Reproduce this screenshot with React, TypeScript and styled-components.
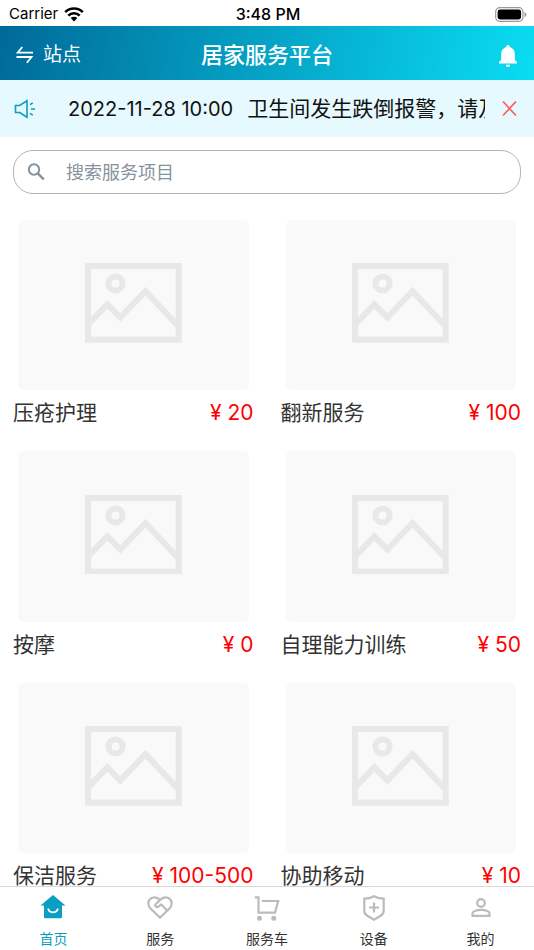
import React from "react";
import styled, { createGlobalStyle } from "styled-components";

const GlobalStyle = createGlobalStyle`
  * { box-sizing: border-box; }
  body {
    margin: 0;
    background: #fff;
    color: #333;
    font-family: Inter, "Noto Sans CJK SC", sans-serif;
  }
  button, input { font: inherit; color: inherit; }
  h1, p { margin: 0; }
`;

const Screen = styled.div`
  display: flex;
  flex-direction: column;
  height: 100vh;
  overflow: hidden;
`;

const StatusBar = styled.div`
  display: grid;
  grid-template-columns: 1fr auto 1fr;
  align-items: center;
  flex: none;
  height: 26px;
  padding: 2px 7px 0 9px;
  color: #000;
  font-size: 15px;
  line-height: 20px;
`;

const Carrier = styled.span`
  display: flex;
  align-items: center;
  gap: 6px;
`;

const Clock = styled.span`
  font-size: 16px;
  font-weight: 500;
`;

const Battery = styled.svg`
  justify-self: end;
`;

const Header = styled.header`
  display: grid;
  grid-template-columns: 1fr auto 1fr;
  align-items: center;
  flex: none;
  height: 54px;
  padding: 4px 14px 0;
  color: #fff;
  background: linear-gradient(100deg, #006a9a, #0adcf2);
`;

const Title = styled.h1`
  font-size: 22px;
  line-height: 32px;
  font-weight: 500;
`;

const PlainButton = styled.button`
  display: flex;
  align-items: center;
  padding: 0;
  border: 0;
  background: none;
  cursor: pointer;
`;

const SiteButton = styled(PlainButton)`
  gap: 7px;
  font-size: 19px;
  line-height: 28px;
`;

const BellButton = styled(PlainButton)`
  justify-self: end;
`;

const Notice = styled.div`
  display: flex;
  align-items: center;
  flex: none;
  height: 57px;
  padding: 0 16px 0 14px;
  color: #111;
  background: #e6f9fe;
`;

const NoticeText = styled.p`
  display: flex;
  align-items: center;
  gap: 14px;
  flex: 1;
  min-width: 0;
  margin: 0 16px 0 32px;
  overflow: hidden;
  white-space: nowrap;
  font-size: 21px;
  line-height: 32px;
`;

const NoticeTime = styled.time`
  font-size: 20px;
`;

const Main = styled.main`
  flex: 1;
  min-height: 0;
  overflow: hidden;
  padding: 13px 13px 0;
`;

const SearchBox = styled.label`
  display: flex;
  align-items: center;
  gap: 20px;
  height: 44px;
  padding: 0 13px;
  border: 1px solid #b4b4b4;
  border-radius: 20px;
`;

const SearchInput = styled.input`
  flex: 1;
  min-width: 0;
  padding: 2px 0 0;
  border: 0;
  outline: 0;
  background: none;
  font-size: 18px;
  line-height: 28px;
  &::placeholder { color: #86939e; opacity: 1; }
`;

const ServiceGrid = styled.div`
  display: grid;
  grid-template-columns: 1fr 1fr;
  gap: 15px 27px;
  margin-top: 26px;
`;

const Thumb = styled.div`
  display: flex;
  align-items: center;
  justify-content: center;
  aspect-ratio: 230 / 170;
  margin: 0 5px;
  padding-bottom: 4px;
  border-radius: 6px;
  background: #f9f9f9;
  svg { width: 42%; }
`;

const Caption = styled.div`
  display: flex;
  justify-content: space-between;
  align-items: center;
  height: 46px;
  font-size: 21px;
  line-height: 32px;
  white-space: nowrap;
`;

const Price = styled.span`
  color: #f00;
`;

const TabBar = styled.nav`
  display: grid;
  grid-template-columns: repeat(5, 1fr);
  flex: none;
  height: 64px;
  border-top: 1px solid #d8d8d8;
  background: #fff;
`;

const Tab = styled.a<{ $active?: boolean }>`
  display: flex;
  flex-direction: column;
  align-items: center;
  gap: 7px;
  padding-top: 7px;
  color: ${(p) => (p.$active ? "#0a9fc2" : "#333")};
  font-size: 14px;
  line-height: 20px;
  text-decoration: none;
  svg { color: ${(p) => (p.$active ? "#0a9fc2" : "#bbb")}; }
`;

const services = [
  { name: "压疮护理", price: "20" },
  { name: "翻新服务", price: "100" },
  { name: "按摩", price: "0" },
  { name: "自理能力训练", price: "50" },
  { name: "保洁服务", price: "100-500" },
  { name: "协助移动", price: "10" },
];

const TabIcon = ({ children }: { children: React.ReactNode }) => (
  <svg width="28" height="28" viewBox="0 0 28 28" fill="none" stroke="currentColor" strokeWidth="2.2" aria-hidden="true">
    {children}
  </svg>
);

const tabs = [
  {
    label: "首页",
    icon: (
      <>
        <path d="M14 1 1.5 11.6H5V23q0 1.2 1.2 1.2h15.6q1.2 0 1.2-1.2V11.6h3.5Z" fill="currentColor" stroke="none" />
        <path d="M9.3 15.2q1.2 3.2 4.7 3.2t4.7-3.2" stroke="#fff" strokeWidth="1.8" strokeLinecap="round" />
      </>
    ),
  },
  {
    label: "服务",
    icon: (
      <>
        <path d="M14 23.6 4.3 14.2C1.6 11.4 1.9 7.3 4.1 5.1 6.6 2.6 10.7 2.6 14 6c3.3-3.4 7.4-3.4 9.9-.9 2.2 2.2 2.5 6.3-.2 9.1Z" strokeLinejoin="round" />
        <path d="m14 6-4.5 4.6c-1 1.1.7 3.4 2.6 2.2l3.3-2.4 5.2 5.6" strokeLinejoin="round" strokeLinecap="round" />
      </>
    ),
  },
  {
    label: "服务车",
    icon: (
      <>
        <path d="M1.8 3.3h3.7v15.3H22L25.2 7H8.8" />
        <circle cx="6.5" cy="24.3" r="2.5" fill="currentColor" stroke="none" />
        <circle cx="20.8" cy="24.3" r="2.5" fill="currentColor" stroke="none" />
      </>
    ),
  },
  {
    label: "设备",
    icon: (
      <>
        <path d="M14 2.2q4.5 2.5 9.7 2.5v12q0 3.2-3 5L14 25.7l-6.7-4q-3-1.8-3-5v-12Q9.5 4.7 14 2.2Z" />
        <path d="M14 8.5v10M9 13.5h10" />
      </>
    ),
  },
  {
    label: "我的",
    icon: (
      <>
        <circle cx="14" cy="9" r="3.8" />
        <path d="M5.500 21.8v-2.200c0-2.600 5-3.800 8.500-3.800s8.500 1.200 8.500 3.800v2.200Z" />
      </>
    ),
  },
];

export default function App() {
  return (
    <>
      <GlobalStyle />
      <Screen>
        <StatusBar>
          <Carrier>
            Carrier
            <svg width="20" height="15" viewBox="0 0 20 15" fill="none" stroke="#000" strokeWidth="2.6" aria-hidden="true">
              <path d="M1.2 5.2a12.4 12.4 0 0 1 17.6 0M4.3 8.6a8 8 0 0 1 11.4 0" />
              <path d="m10 14.4-3.3-3.3a4.7 4.7 0 0 1 6.6 0Z" fill="#000" stroke="none" />
            </svg>
          </Carrier>
          <Clock>3:48 PM</Clock>
          <Battery width="32" height="15" viewBox="0 0 32 15" role="img" aria-label="电量">
            <rect x=".7" y=".7" width="27.3" height="13.6" rx="4" fill="none" stroke="#999" strokeWidth="1.2" />
            <rect x="2.6" y="2.6" width="23.5" height="9.8" rx="2.4" />
            <path d="M29.5 5v5q1.9-.8 1.9-2.5T29.5 5Z" fill="#999" />
          </Battery>
        </StatusBar>
        <Header>
          <SiteButton type="button">
            <svg width="22" height="20" viewBox="0 0 22 20" fill="none" stroke="#fff" strokeWidth="1.8" aria-hidden="true">
              <path d="M8.300 2 3.700 7.700H19M2.500 12H17.500L12.900 17.700" />
            </svg>
            站点
          </SiteButton>
          <Title>居家服务平台</Title>
          <BellButton type="button" aria-label="消息">
            <svg width="24" height="24" viewBox="0 0 24 24" fill="#fff" aria-hidden="true">
              <path d="M12 2c-1 0-1.700.7-1.700 1.600v.5C7.200 4.900 5.200 7.500 5.200 10.800v6L3 19v1.600h18V19l-2.200-2.200v-6c0-3.300-2-5.900-5.100-6.700v-.5C13.700 2.700 13 2 12 2ZM9.800 21.800a2.200 2.200 0 0 0 4.400 0Z" />
            </svg>
          </BellButton>
        </Header>
        <Notice>
          <svg width="22" height="20" viewBox="0 0 22 20" fill="none" stroke="#0a9fc2" strokeWidth="1.6" aria-hidden="true">
            <path d="M1.500 6.500h4.200L13 1.800v16.400l-7.300-4.700H1.500Z" />
            <path d="m16 5.700 2.800-1.900M17 10h4M16 14.300l2.800 1.900" />
          </svg>
          <NoticeText>
            <NoticeTime dateTime="2022-11-28T10:00">2022-11-28 10:00</NoticeTime>
            <span>卫生间发生跌倒报警，请及时处理</span>
          </NoticeText>
          <PlainButton type="button" aria-label="关闭">
            <svg width="17" height="17" viewBox="0 0 17 17" fill="none" stroke="#ff5a5f" strokeWidth="1.7" aria-hidden="true">
              <path d="m2 1.500 13 14M15 1.500l-13 14" />
            </svg>
          </PlainButton>
        </Notice>
        <Main>
          <SearchBox>
            <svg width="19" height="19" viewBox="0 0 19 19" fill="none" stroke="#86939e" strokeWidth="2" aria-hidden="true">
              <circle cx="7" cy="6.500" r="5.200" />
              <path d="m10.800 10.300 6 6" strokeWidth="2.400" />
            </svg>
            <SearchInput type="text" aria-label="搜索服务项目" placeholder="搜索服务项目" />
          </SearchBox>
          <ServiceGrid>
            {services.map((s) => (
              <article key={s.name}>
                <Thumb>
                  <svg viewBox="0 0 96 79" fill="none" stroke="#e8e8e8" strokeWidth="6" aria-hidden="true">
                    <rect x="3" y="3" width="90" height="73" />
                    <circle cx="30.300" cy="20.300" r="7" />
                    <path d="m4 60 18-19 13 13 25-26 32 34" />
                  </svg>
                </Thumb>
                <Caption>
                  <span>{s.name}</span>
                  <Price>¥ {s.price}</Price>
                </Caption>
              </article>
            ))}
          </ServiceGrid>
        </Main>
        <TabBar>
          {tabs.map((t, i) => (
            <Tab key={t.label} href="#" $active={i === 0} aria-current={i === 0 ? "page" : undefined}>
              <TabIcon>{t.icon}</TabIcon>
              {t.label}
            </Tab>
          ))}
        </TabBar>
      </Screen>
    </>
  );
}
